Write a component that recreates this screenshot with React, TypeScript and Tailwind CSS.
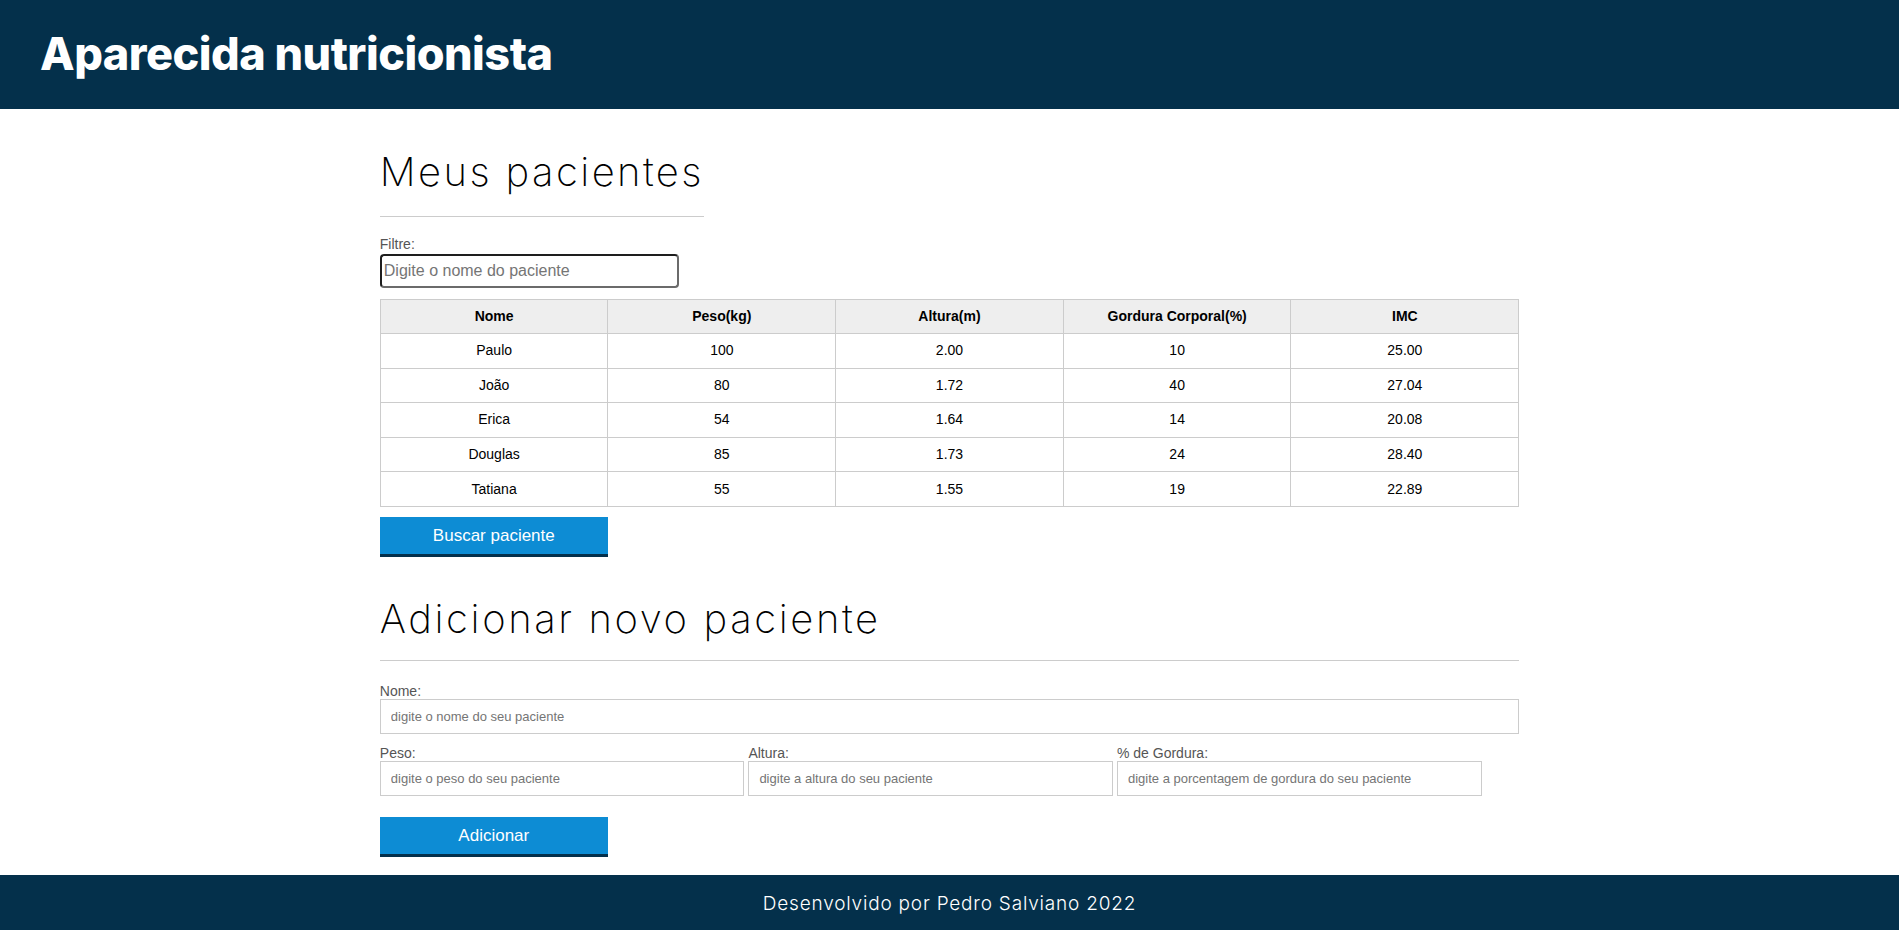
import React from 'react';

const pacientes = [
  { nome: 'Paulo', peso: '100', altura: '2.00', gordura: '10', imc: '25.00' },
  { nome: 'João', peso: '80', altura: '1.72', gordura: '40', imc: '27.04' },
  { nome: 'Erica', peso: '54', altura: '1.64', gordura: '14', imc: '20.08' },
  { nome: 'Douglas', peso: '85', altura: '1.73', gordura: '24', imc: '28.40' },
  { nome: 'Tatiana', peso: '55', altura: '1.55', gordura: '19', imc: '22.89' },
];

const colunas = ['Nome', 'Peso(kg)', 'Altura(m)', 'Gordura Corporal(%)', 'IMC'];

const Campo: React.FC<{ label: string; placeholder: string; className?: string }> = ({ label, placeholder, className }) => (
  <div className={className}>
    <label className="block text-[14px] leading-[16px] text-[#555]">{label}</label>
    <input
      type="text"
      placeholder={placeholder}
      className="block w-full h-[35px] border border-[#ccc] bg-white pl-[10px] text-[13px] text-[#333] placeholder:text-[#757575] outline-none"
    />
  </div>
);

export default function App() {
  return (
    <div className="min-h-screen bg-white font-['Liberation_Sans',Arial,sans-serif] text-black">
      {/* Header */}
      <header className="h-[109px] bg-[#04304b] flex items-center px-10">
        <h1 className="font-['Inter',sans-serif] font-extrabold text-[45px] text-white tracking-[-0.5px] pb-[2px]">
          Aparecida nutricionista
        </h1>
      </header>

      <main className="w-[60%] mx-auto">
        {/* Meus pacientes */}
        <section className="pt-[39px]">
          <h2 className="inline-block font-['Inter',sans-serif] font-extralight text-[40px] leading-[48px] tracking-[2.4px] pb-[20px] border-b border-[#ccc]">
            Meus pacientes
          </h2>
          <label className="block mt-[19px] text-[14px] leading-[16px] text-[#555]">Filtre:</label>
          <input
            type="text"
            placeholder="Digite o nome do paciente"
            className="block mt-[2px] w-[299px] h-[34px] rounded-[4px] border-2 border-t-[#1e1e1e] border-l-[#1e1e1e] border-r-[#6b6b6b] border-b-[#6b6b6b] px-[2px] text-[16px] placeholder:text-[#757575] outline-none"
          />

          <table className="w-full mt-[11px] border-collapse table-fixed text-[14px]">
            <thead>
              <tr className="h-[34px] bg-[#eee]">
                {colunas.map((c) => (
                  <th key={c} className="border border-[#ccc] font-bold">{c}</th>
                ))}
              </tr>
            </thead>
            <tbody>
              {pacientes.map((p) => (
                <tr key={p.nome} className="h-[34.6px]">
                  <td className="border border-[#ccc] text-center">{p.nome}</td>
                  <td className="border border-[#ccc] text-center">{p.peso}</td>
                  <td className="border border-[#ccc] text-center">{p.altura}</td>
                  <td className="border border-[#ccc] text-center">{p.gordura}</td>
                  <td className="border border-[#ccc] text-center">{p.imc}</td>
                </tr>
              ))}
            </tbody>
          </table>

          <button className="block mt-[10px] w-[228px] h-[40px] bg-[#0d8cd4] border-b-[3px] border-[#04304b] text-white text-[17px]">
            Buscar paciente
          </button>
        </section>

        {/* Adicionar novo paciente */}
        <section className="pt-[38px]">
          <h2 className="font-['Inter',sans-serif] font-extralight text-[40px] leading-[48px] tracking-[2.6px] pb-[17px] border-b border-[#ccc]">
            Adicionar novo paciente
          </h2>
          <form className="mt-[22px]" onSubmit={(e) => e.preventDefault()}>
            <Campo label="Nome:" placeholder="digite o nome do seu paciente" />
            <div className="flex gap-[4px] mt-[11px]">
              <Campo label="Peso:" placeholder="digite o peso do seu paciente" className="w-[32%]" />
              <Campo label="Altura:" placeholder="digite a altura do seu paciente" className="w-[32%]" />
              <Campo label="% de Gordura:" placeholder="digite a porcentagem de gordura do seu paciente" className="w-[32%]" />
            </div>
            <button className="block mt-[21px] w-[228px] h-[40px] bg-[#0d8cd4] border-b-[3px] border-[#04304b] text-white text-[17px]">
              Adicionar
            </button>
          </form>
        </section>
      </main>

      {/* Footer */}
      <footer className="mt-[18px] h-[58px] bg-[#04304b] flex items-center justify-center">
        <p className="font-['Inter',sans-serif] font-light text-[19px] tracking-[0.8px] text-white">Desenvolvido por Pedro Salviano 2022</p>
      </footer>
    </div>
  );
}
